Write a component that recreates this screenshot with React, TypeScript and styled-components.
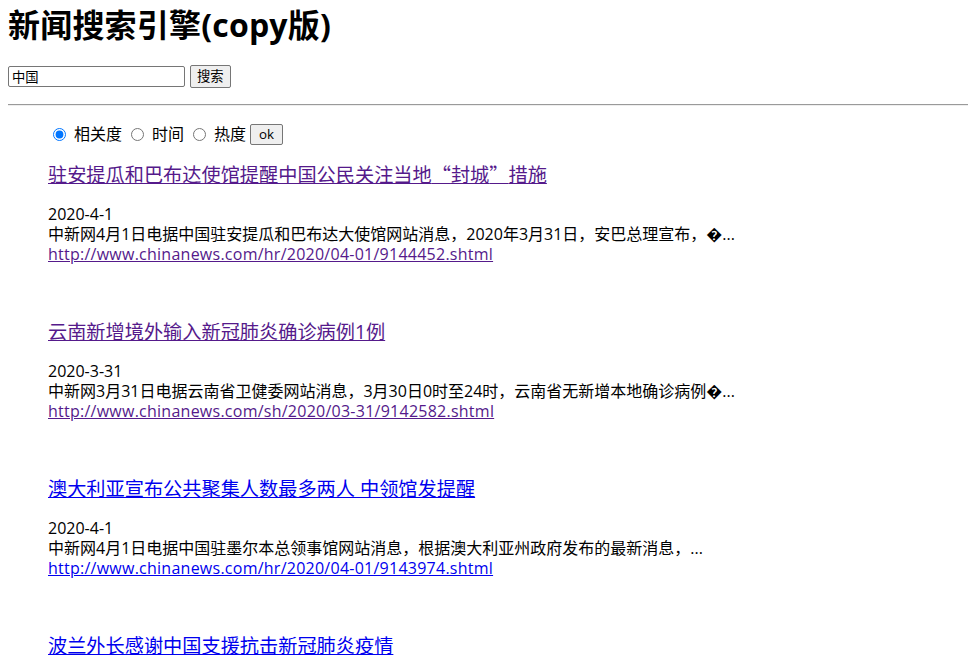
import styled, { createGlobalStyle } from 'styled-components';

type NewsItem = {
  title: string;
  visited: boolean;
  date?: string;
  summary?: string;
  url?: string;
};

const news: NewsItem[] = [
  {
    title: '驻安提瓜和巴布达使馆提醒中国公民关注当地“封城”措施',
    visited: true,
    date: '2020-4-1',
    summary: '中新网4月1日电据中国驻安提瓜和巴布达大使馆网站消息，2020年3月31日，安巴总理宣布，\uFFFD...',
    url: 'http://www.chinanews.com/hr/2020/04-01/9144452.shtml',
  },
  {
    title: '云南新增境外输入新冠肺炎确诊病例1例',
    visited: true,
    date: '2020-3-31',
    summary: '中新网3月31日电据云南省卫健委网站消息，3月30日0时至24时，云南省无新增本地确诊病例\uFFFD...',
    url: 'http://www.chinanews.com/sh/2020/03-31/9142582.shtml',
  },
  {
    title: '澳大利亚宣布公共聚集人数最多两人 中领馆发提醒',
    visited: false,
    date: '2020-4-1',
    summary: '中新网4月1日电据中国驻墨尔本总领事馆网站消息，根据澳大利亚州政府发布的最新消息，...',
    url: 'http://www.chinanews.com/hr/2020/04-01/9143974.shtml',
  },
  {
    title: '波兰外长感谢中国支援抗击新冠肺炎疫情',
    visited: false,
  },
];

const GlobalStyle = createGlobalStyle`
  html, body {
    margin: 0;
    overflow: hidden;
    background: #fff;
  }
`;

const Page = styled.div`
  padding: 8px;
  font-family: 'Open Sans', 'Noto Sans CJK SC', sans-serif;
  font-size: 16px;
  color: #000;
`;

const Heading = styled.h1`
  margin: 0;
  font-size: 32px;
  font-weight: 700;
  line-height: 34px;
  letter-spacing: 0.2px;
`;

const SearchForm = styled.form`
  display: flex;
  align-items: center;
  gap: 5px;
  margin-top: 23px;
`;

const SearchInput = styled.input`
  box-sizing: border-box;
  width: 177px;
  height: 21px;
  padding: 1px 3px;
  border: 1px solid #767676;
  border-radius: 2px;
  font-family: 'Open Sans', 'Noto Sans CJK SC', sans-serif;
  font-size: 13.33px;
  color: #000;
  outline: none;
`;

const Button = styled.button<{ $height: number; $padX: number }>`
  box-sizing: border-box;
  height: ${(p) => p.$height}px;
  padding: 0 ${(p) => p.$padX}px;
  margin: 0;
  border: 1px solid #767676;
  border-radius: 2px;
  background: #efefef;
  font-family: 'Open Sans', 'Noto Sans CJK SC', sans-serif;
  font-size: 13.33px;
  line-height: 1;
  color: #000;
`;

const Divider = styled.hr`
  height: 0;
  margin: 16px -8px 0 0;
  border: none;
  border-top: 1px solid #9a9a9a;
  border-bottom: 1px solid #eeeeee;
`;

const Results = styled.div`
  margin-left: 40px;
`;

const SortBar = styled.form`
  display: flex;
  align-items: center;
  gap: 4px;
  height: 21px;
  margin-top: 18px;
  line-height: 21px;
`;

const SortOption = styled.label`
  display: flex;
  align-items: center;
`;

const Radio = styled.input`
  width: 13px;
  height: 13px;
  margin: 0 8px 0 5px;
`;

const NewsList = styled.div`
  display: flex;
  flex-direction: column;
  gap: 55px;
  margin-top: 16px;
`;

const Item = styled.div`
  display: flex;
  flex-direction: column;
`;

const Link = styled.a<{ $visited: boolean }>`
  color: ${(p) => (p.$visited ? '#551a8b' : '#0000ee')};
  text-decoration: underline;
`;

const Title = styled(Link)`
  font-size: 19.2px;
  line-height: 26px;
  align-self: flex-start;
`;

const Quote = styled.span`
  font-family: 'Noto Sans CJK SC', sans-serif;
`;

const Meta = styled.div`
  margin-top: 16px;
  line-height: 20px;
`;

const Line = styled.div`
  white-space: nowrap;
`;

const UrlLink = styled(Link)`
  letter-spacing: 0.25px;
`;

// full-width quotes come from the CJK face, as on the original page
function renderTitle(title: string) {
  return title.split(/([“”])/).map((part, i) =>
    part === '“' || part === '”' ? <Quote key={i}>{part}</Quote> : part,
  );
}

export default function App() {
  return (
    <Page>
      <GlobalStyle />
      <Heading>新闻搜索引擎(copy版)</Heading>
      <SearchForm onSubmit={(e) => e.preventDefault()}>
        <SearchInput type="text" defaultValue="中国" />
        <Button type="submit" $height={23} $padX={6}>搜索</Button>
      </SearchForm>
      <Divider />
      <Results>
        <SortBar onSubmit={(e) => e.preventDefault()}>
          <SortOption>
            <Radio type="radio" name="sort" defaultChecked />
            相关度
          </SortOption>
          <SortOption>
            <Radio type="radio" name="sort" />
            时间
          </SortOption>
          <SortOption>
            <Radio type="radio" name="sort" />
            热度
          </SortOption>
          <Button type="submit" $height={21} $padX={8}>ok</Button>
        </SortBar>
        <NewsList>
          {news.map((item) => (
            <Item key={item.title}>
              <Title href={item.url ?? '#'} $visited={item.visited}>
                {renderTitle(item.title)}
              </Title>
              {item.date && (
                <Meta>
                  <Line>{item.date}</Line>
                  <Line>{item.summary}</Line>
                  <Line>
                    <UrlLink href={item.url} $visited={item.visited}>
                      {item.url}
                    </UrlLink>
                  </Line>
                </Meta>
              )}
            </Item>
          ))}
        </NewsList>
      </Results>
    </Page>
  );
}
